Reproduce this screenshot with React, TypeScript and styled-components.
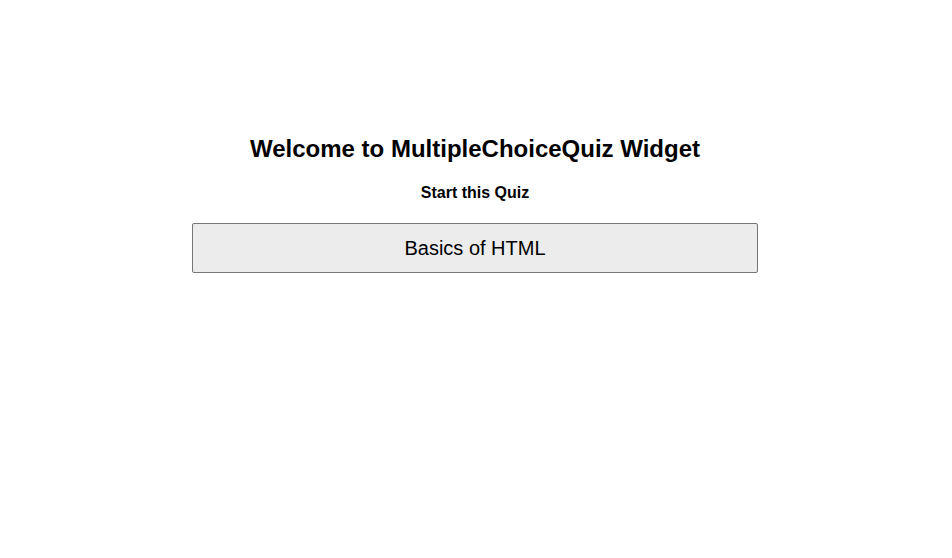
import React from "react";
import styled, { createGlobalStyle } from "styled-components";

const Global = createGlobalStyle`
  html, body { margin: 0; padding: 0; background: #fff; }
  body { font-family: "Liberation Sans", Arial, Helvetica, sans-serif; color: #000; }
`;

const Page = styled.main`
  display: flex;
  flex-direction: column;
  align-items: center;
  padding-top: 134px;
  width: 950px;
  min-height: 558px;
  box-sizing: border-box;
`;

const Title = styled.h1`
  margin: 0;
  font-size: 24px;
  font-weight: 700;
  line-height: 30px;
`;

const Subtitle = styled.h3`
  margin: 19px 0 0;
  font-size: 16px;
  font-weight: 700;
  line-height: 20px;
`;

const QuizButton = styled.button`
  margin-top: 20px;
  width: 566px;
  height: 50px;
  background: #ececec;
  border: 1px solid #767676;
  border-radius: 2px;
  font-family: "Liberation Sans", Arial, Helvetica, sans-serif;
  font-size: 20px;
  color: #000;
  cursor: pointer;
`;

export default function App() {
  return (
    <>
      <Global />
      <Page>
        <Title>Welcome to MultipleChoiceQuiz Widget</Title>
        <Subtitle>Start this Quiz</Subtitle>
        <QuizButton>Basics of HTML</QuizButton>
      </Page>
    </>
  );
}
